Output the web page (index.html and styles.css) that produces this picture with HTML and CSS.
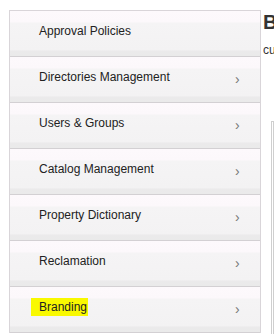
FILE: index.html
```html
<!DOCTYPE html>
<html>
    <head>
        <title>Administration</title>
        <link rel="stylesheet" href="styles.css">
    </head>
    <body>
        <div class="layout">
            <ul class="side-menu">
                <li class="menu-item"><span class="label">Approval Policies</span></li>
                <li class="menu-item"><span class="label">Directories Management</span><span class="chevron">&rsaquo;</span></li>
                <li class="menu-item"><span class="label">Users &amp; Groups</span><span class="chevron">&rsaquo;</span></li>
                <li class="menu-item"><span class="label">Catalog Management</span><span class="chevron">&rsaquo;</span></li>
                <li class="menu-item"><span class="label">Property Dictionary</span><span class="chevron">&rsaquo;</span></li>
                <li class="menu-item"><span class="label">Reclamation</span><span class="chevron">&rsaquo;</span></li>
                <li class="menu-item"><span class="label"><span class="highlight">Branding</span></span><span class="chevron">&rsaquo;</span></li>
            </ul>
            <div class="content">
                <h1 class="title">Branding</h1>
                <p class="subtitle">customize the look of the portal</p>
                <div class="panel"></div>
            </div>
        </div>
    </body>
</html>
```
FILE: styles.css
```css
body {
    margin: 0;
    font-family: "Liberation Sans", Arial, sans-serif;
    background: #fff;
    overflow: hidden;
}
.layout {
    display: flex;
    align-items: flex-start;
    padding: 10px 0 0 9px;
}
.side-menu {
    list-style: none;
    margin: 0;
    padding: 0;
    width: 250px;
    flex: none;
    border: 1px solid #d9d5d9;
    border-bottom: none;
}
.menu-item {
    display: flex;
    align-items: flex-start;
    height: 45px;
    box-sizing: content-box;
    border-bottom: 1px solid #d3d0d3;
    background: linear-gradient(#fdf9fc 0, #fcf8fb 24%, #f5f4f5 27%, #f3f2f3 86%, #ebeaeb 89%, #eaeaea 100%);
}
.label {
    flex: 1;
    padding: 13px 0 0 29px;
    font-size: 12px;
    line-height: 14px;
    color: #222;
}
.highlight {
    background: #f9f900;
    padding: 2px 1px 2px 8px;
    margin-left: -8px;
}
.chevron {
    width: 25px;
    padding-top: 14px;
    font-size: 14px;
    line-height: 16px;
    color: #777;
}
.content {
    flex: 1;
    margin-left: 2px;
    min-width: 0;
    overflow: hidden;
}
.title {
    margin: 0;
    font-size: 20px;
    line-height: 24px;
    font-weight: bold;
    color: #333;
    white-space: nowrap;
}
.subtitle {
    margin: 9px 0 0;
    font-size: 12px;
    line-height: 14px;
    color: #333;
    white-space: nowrap;
}
.panel {
    margin: 64px 0 0 8px;
    height: 300px;
    border: 1px solid #cfcfcf;
}
```
